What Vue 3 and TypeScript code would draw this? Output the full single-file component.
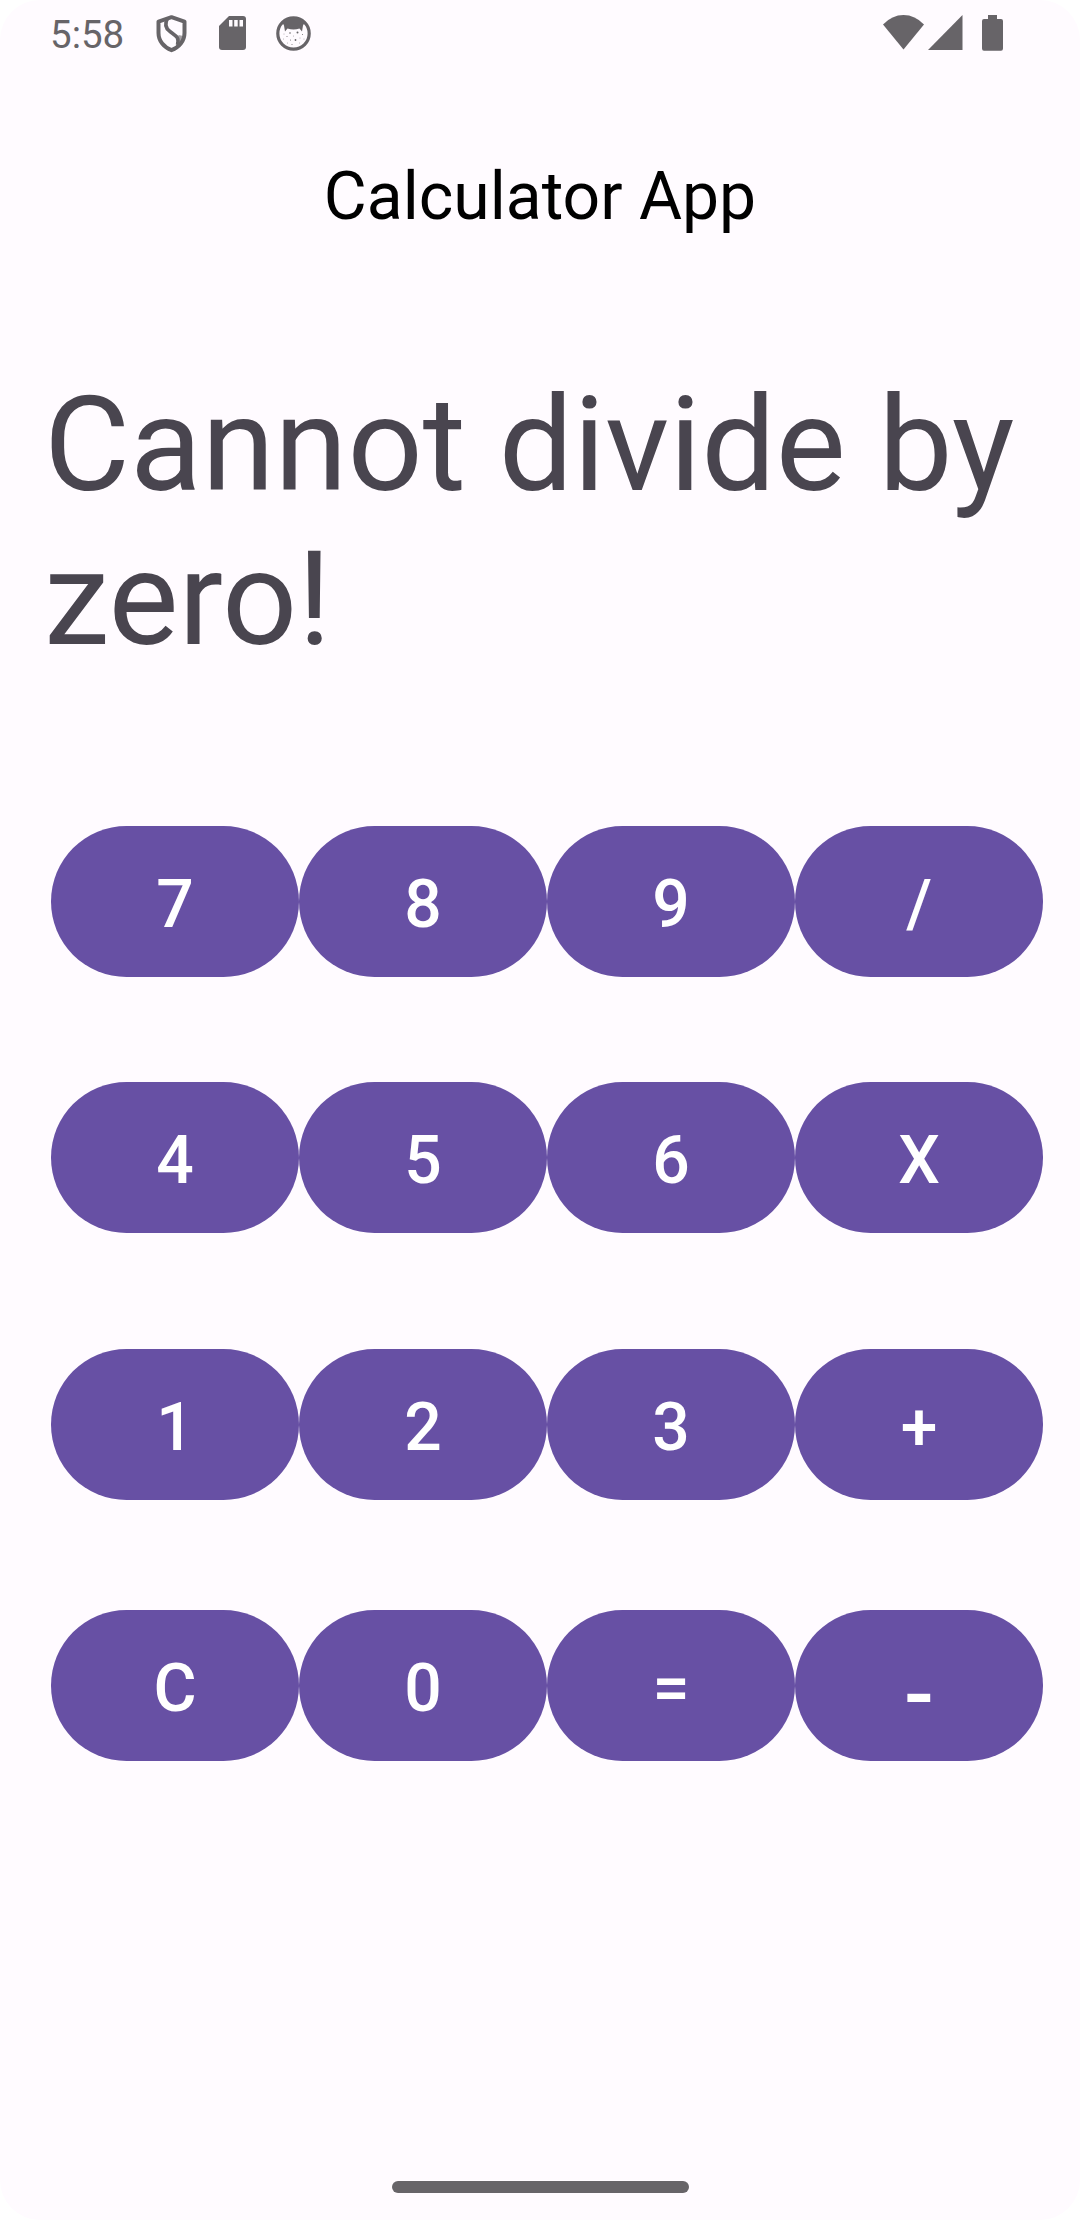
<script setup lang="ts">
interface Key {
  label: string
  kind?: string
}

const rows: Key[][] = [
  [{ label: '7' }, { label: '8' }, { label: '9' }, { label: '/' }],
  [{ label: '4' }, { label: '5' }, { label: '6' }, { label: 'X' }],
  [{ label: '1' }, { label: '2' }, { label: '3' }, { label: '+' }],
  [{ label: 'C' }, { label: '0' }, { label: '=' }, { label: '-', kind: 'minus' }],
]
</script>

<template>
  <div class="frame">
    <main class="screen">
      <header class="status">
        <span class="clock">5:58</span>
        <svg class="shield" width="32" height="38" viewBox="0 0 32 38">
          <path d="M15.500 2.200 L28.500 6.600 V18 C28.500 26 23 32.500 15.500 35.200 C8 32.500 2.500 26 2.500 18 V6.600 Z" fill="none" stroke="currentColor" stroke-width="4" stroke-linejoin="round" />
          <path d="M11.500 3.500 C9 8 9 13 14 16.500 C20 21 23.500 22 21.500 30" fill="none" stroke="currentColor" stroke-width="3.600" />
          <path d="M22.500 20 L27.500 21 L24.500 28 L20 32 Z" fill="currentColor" opacity=".6" />
        </svg>
        <svg class="card" width="27" height="34" viewBox="0 0 27 34">
          <path d="M10 0 H24 Q27 0 27 3 V31 Q27 34 24 34 H3 Q0 34 0 31 V10 Z" fill="currentColor" />
          <path d="M10 4 h3.500 v6.500 h-3.500 z M15.200 4 h3.500 v6.500 h-3.500 z M20.500 4 h3.500 v6.500 h-3.500 z" fill="#fffbff" />
        </svg>
        <svg class="face" width="35" height="35" viewBox="0 0 35 35">
          <circle cx="17.500" cy="17.500" r="15.700" fill="#fffbff" stroke="currentColor" stroke-width="3.200" />
          <path d="M6 6 Q17.500 -3 29 6 L27 9.500 L26 15.500 L23.500 12.500 Q17.500 14.500 11.500 12.500 L9 15.500 L8 9.500 Z" fill="currentColor" />
          <g fill="currentColor">
            <circle cx="14" cy="17" r=".8" /><circle cx="21.500" cy="16.500" r="1" />
            <circle cx="8" cy="18" r=".4" /><circle cx="11" cy="20.500" r=".5" />
            <circle cx="17.500" cy="20" r=".4" /><circle cx="26.500" cy="18.500" r=".5" />
            <circle cx="7.500" cy="23" r=".4" /><circle cx="14.500" cy="24" r=".5" />
            <circle cx="19.500" cy="24" r=".9" /><circle cx="24" cy="22" r=".4" />
            <circle cx="11.500" cy="27" r=".4" /><circle cx="16" cy="28.500" r=".5" />
            <circle cx="23.500" cy="27" r=".4" /><circle cx="28" cy="23" r=".4" />
          </g>
        </svg>
        <span class="spacer"></span>
        <svg class="wifi" width="41" height="35" viewBox="0 0 41 35">
          <path d="M0 9.500 Q9 0 20.500 0 T41 9.500 L20.500 34.500 Z" fill="currentColor" />
        </svg>
        <svg class="signal" width="35" height="35" viewBox="0 0 35 35">
          <path d="M34.500 0 V35 H0 Z" fill="currentColor" />
        </svg>
        <svg class="battery" width="21" height="36" viewBox="0 0 21 36">
          <path d="M6 0 H15 V4 H19 Q21 4 21 6 V33.500 Q21 35.700 19 35.700 H2 Q0 35.700 0 33.500 V6 Q0 4 2 4 H6 Z" fill="currentColor" />
        </svg>
      </header>

      <h1 class="title">Calculator App</h1>
      <p class="display">Cannot divide by zero!</p>

      <section class="keypad">
        <div v-for="(row, i) in rows" :key="i" class="row">
          <button v-for="key in row" :key="key.label" type="button" class="key">
            <span :class="key.kind">{{ key.label }}</span>
          </button>
        </div>
      </section>

      <footer class="nav"><span class="pill"></span></footer>
    </main>
  </div>
</template>

<style>
body {
  margin: 0;
}
</style>

<style scoped>
.frame {
  width: 1080px;
  height: 2220px;
  background: #fff;
  font-family: Roboto, "Liberation Sans", sans-serif;
}
.screen {
  display: flex;
  flex-direction: column;
  box-sizing: border-box;
  width: 100%;
  height: 100%;
  overflow: hidden;
  border-radius: 40px;
  background: #fffbff;
}
.status {
  display: flex;
  align-items: flex-start;
  flex: none;
  box-sizing: border-box;
  height: 66px;
  padding: 15px 77px 0 50px;
  color: #676468;
}
.clock {
  width: 106px;
  margin-top: -3px;
  font-size: 38.5px;
  line-height: 46px;
}
.card {
  margin: 1px 0 0 31px;
}
.face {
  margin: 1px 0 0 30px;
}
.spacer {
  flex: 1;
}
.signal {
  margin-left: 4px;
}
.battery {
  margin-left: 19px;
}
.title {
  flex: none;
  margin: 92px 0 0;
  font-size: 66px;
  font-weight: 400;
  line-height: 77px;
  text-align: center;
  color: #000;
}
.display {
  flex: none;
  height: 308px;
  margin: 133px 36px 0 44px;
  font-size: 132px;
  line-height: 154px;
  color: #49454f;
}
.keypad {
  flex: none;
  margin: 150px 37px 0 51px;
}
.row {
  display: flex;
  height: 151px;
}
.row:nth-child(2) {
  margin-top: 105px;
}
.row:nth-child(3) {
  margin-top: 116px;
}
.row:nth-child(4) {
  margin-top: 110px;
}
.key {
  display: flex;
  flex: 1;
  align-items: center;
  justify-content: center;
  padding: 5px 0 0;
  border: 0;
  border-radius: 76px;
  background: #6750a4;
  color: #fff;
  font-family: inherit;
  font-size: 66px;
  font-weight: 500;
  line-height: 77px;
}
.minus {
  padding-top: 10px;
  font-size: 88px;
}
.nav {
  display: flex;
  justify-content: center;
  margin-top: auto;
  padding-bottom: 27.5px;
}
.pill {
  width: 297px;
  height: 11.5px;
  border-radius: 6px;
  background: #676468;
}
</style>
